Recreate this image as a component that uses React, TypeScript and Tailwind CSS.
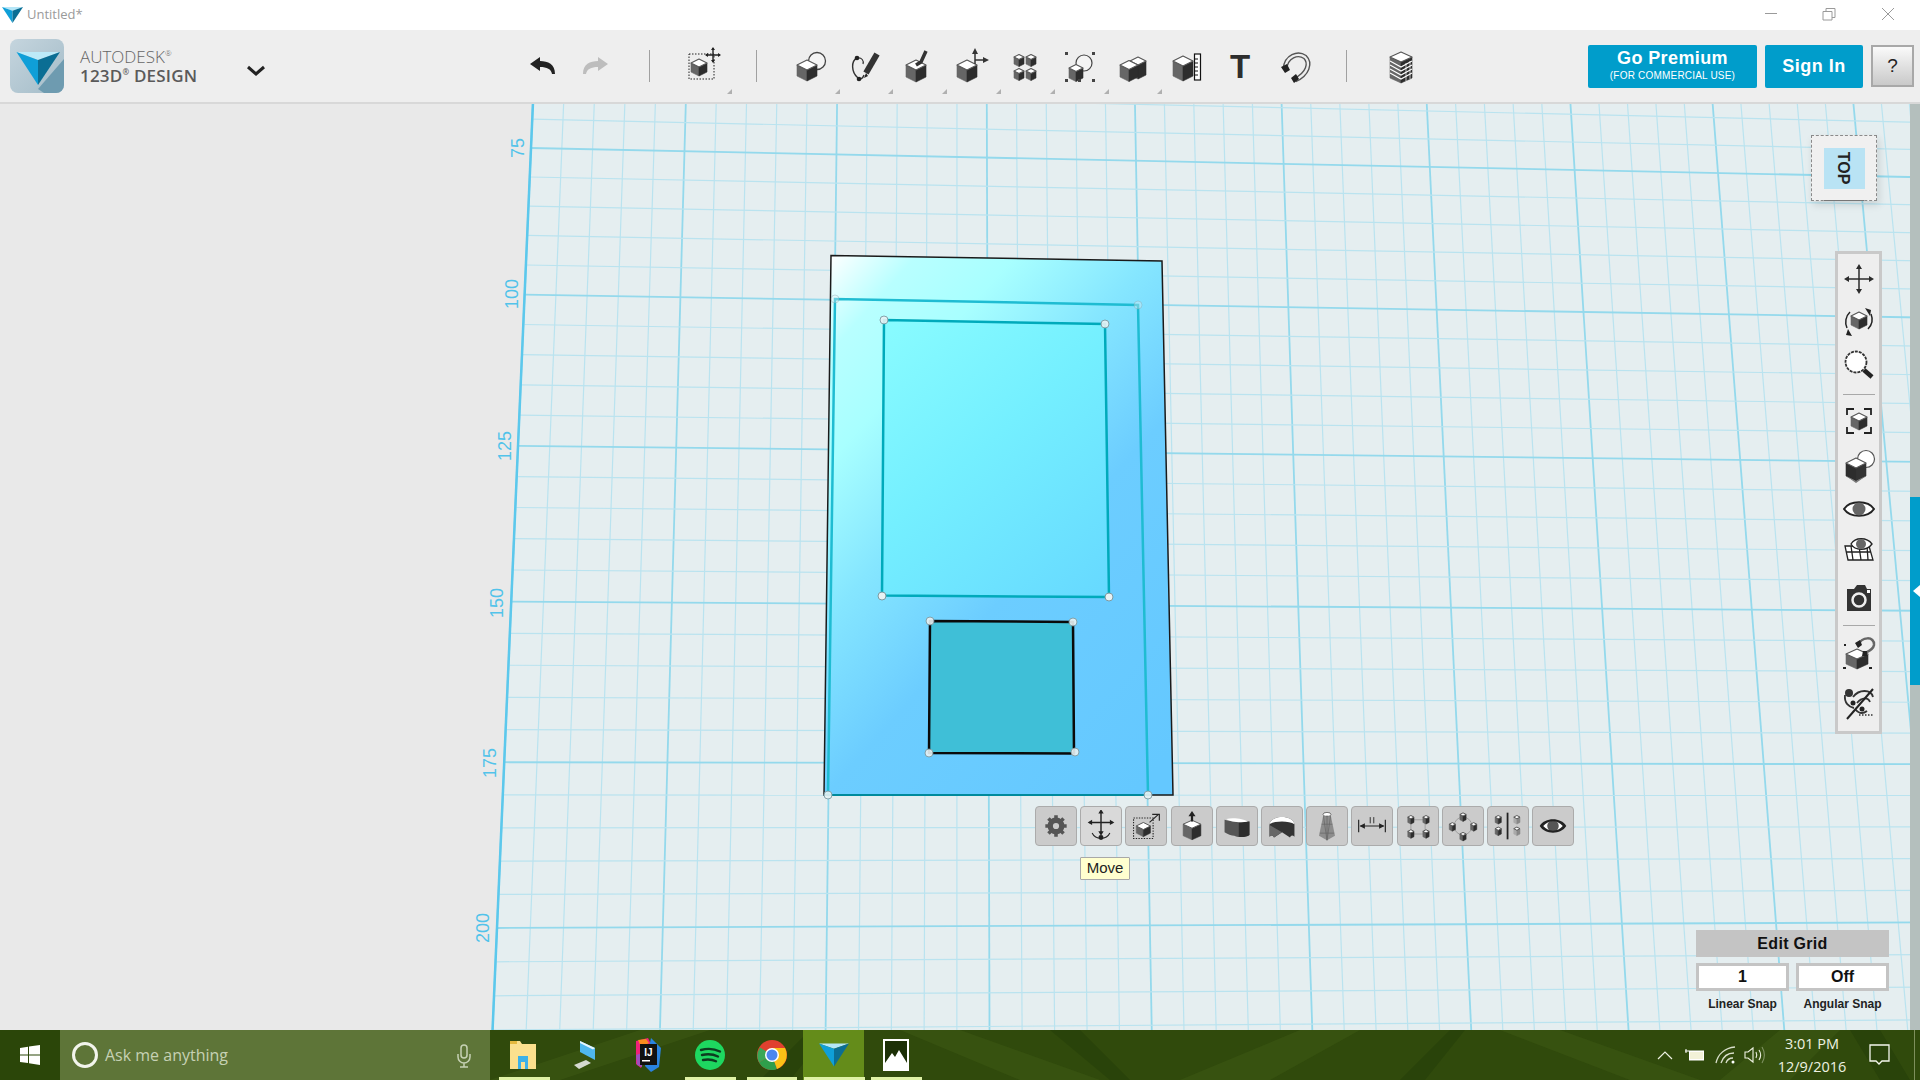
import React from "react";

type CP = { x: number; y: number; a?: number; b?: number; c?: number; l?: string; r?: string; t?: string };
const Cube = ({ x, y, a = 10, b = 5, c = 12, l = "#666", r = "#2d2d2d", t = "#fff" }: CP) => (
  <g>
    <polygon points={`${x - a},${y} ${x},${y + b} ${x},${y + b + c} ${x - a},${y + c}`} fill={l} stroke={l} strokeWidth=".6" />
    <polygon points={`${x + a},${y} ${x},${y + b} ${x},${y + b + c} ${x + a},${y + c}`} fill={r} stroke={r} strokeWidth=".6" />
    <polygon points={`${x},${y - b} ${x + a},${y} ${x},${y + b} ${x - a},${y}`} fill={t} stroke="#555" strokeWidth="1.1" strokeLinejoin="round" />
  </g>
);
const Ic = ({ children, s = 36, v = 36 }: { children: React.ReactNode; s?: number; v?: number }) => (
  <svg width={s} height={s} viewBox={`0 0 ${v} ${v}`} className="block shrink-0">{children}</svg>
);
const Logo = ({ w, h }: { w: number; h: number }) => (
  <svg width={w} height={h} viewBox="0 0 44 34" className="block">
    <polygon points="0,0 44,0 22,8" fill="#b5e6f7" />
    <polygon points="0,0 22,8 22,34" fill="#0f9fd8" />
    <polygon points="44,0 22,8 22,34" fill="#0b6e94" />
  </svg>
);

const tbIcons: React.ReactNode[] = [
  <Ic key="a"><rect x="4" y="7" width="25" height="25" fill="none" stroke="#222" strokeWidth="1" strokeDasharray="1.5 1.5" /><Cube x={14} y={16} a={8} b={4} c={9} /><path d="M28 1v14M21 8h14" stroke="#222" strokeWidth="1.4" /><path d="M28 0l-2 3h4zM28 16l-2-3h4zM20 8l3-2v4zM36 8l-3-2v4z" fill="#222" /></Ic>,
  <Ic key="b"><circle cx="25" cy="13" r="8.5" fill="#f4f4f4" stroke="#444" strokeWidth="1.3" /><Cube x={15} y={17} a={10} b={5} c={11} /></Ic>,
  <Ic key="c"><path d="M10 10C4 13 4 24 11 30c3 2 5 0 6-3" fill="none" stroke="#333" strokeWidth="1.4" /><path d="M10 10c5-1 7 3 6 6" fill="none" stroke="#333" strokeWidth="1.2" /><path d="M30 6l-11 19" stroke="#333" strokeWidth="6" /><path d="M19 25l-2 5 4-2z" fill="#222" /><circle cx="10" cy="10" r="2.3" fill="#222" /><circle cx="12" cy="31" r="2.3" fill="#222" /></Ic>,
  <Ic key="d"><Cube x={16} y={17} a={10} b={5} c={12} /><path d="M16 17l5-3 5-11" stroke="#333" strokeWidth="3.5" fill="none" /></Ic>,
  <Ic key="e"><Cube x={14} y={17} a={10} b={5} c={12} /><path d="M22 16V4M22 12h10" stroke="#333" strokeWidth="1.5" /><path d="M22 0l-3 6h6zM36 12l-6-3v6z" fill="#333" /></Ic>,
  <Ic key="f"><Cube x={12} y={9} a={5} b={2.5} c={7} /><Cube x={24} y={9} a={5} b={2.5} c={7} /><Cube x={12} y={23} a={5} b={2.5} c={7} /><Cube x={24} y={23} a={5} b={2.5} c={7} /></Ic>,
  <Ic key="g"><circle cx="22" cy="15" r="8" fill="#f4f4f4" stroke="#444" strokeWidth="1.2" /><Cube x={14} y={20} a={7} b={3.5} c={10} /><path d="M3 4h3v3H3zM30 4h3v3h-3zM3 31h3v3H3zM30 31h3v3h-3zM16 31h3v3h-3z" fill="#444" /></Ic>,
  <Ic key="h"><Cube x={23} y={13} a={8} b={4} c={14} /><Cube x={14} y={17} a={9} b={4.5} c={12} /></Ic>,
  <Ic key="i"><Cube x={14} y={13} a={10} b={5} c={15} /><rect x="25.5" y="6" width="6" height="26" fill="#fff" stroke="#111" strokeWidth="1.2" /><path d="M26 11h3M26 15h3M26 19h3M26 23h3M26 27h3" stroke="#111" /></Ic>,
  <Ic key="j"><text x="18" y="30" textAnchor="middle" fontFamily="Liberation Sans" fontWeight="700" fontSize="33" fill="#2d2d2d">T</text></Ic>,
  <Ic key="k"><path d="M8 21C9 8 21 4 28 9c6 6 3 17-10 23" fill="none" stroke="#555" strokeWidth="5" /><path d="M8 21C9 8 21 4 28 9c6 6 3 17-10 23" fill="none" stroke="#eee" strokeWidth="2.2" /><path d="M4 19l6-3 3 6-5 3zM14 30l5-4 3 5-5 4z" fill="#222" /></Ic>,
  <Ic key="l"><Cube x={18} y={9} a={11} b={5} c={21} /><path d="M7 13l11 6 11-6M7 17l11 6 11-6M7 21l11 6 11-6M7 25l11 6 11-6" stroke="#fff" strokeWidth="1.1" fill="none" /><path d="M23 15v18M27 13v18" stroke="#fff" strokeWidth=".7" /></Ic>,
];

const Arrows = ({ c = "#2c2c2c", s = 1.5 }: { c?: string; s?: number }) => (
  <g>
    <path d="M18 5v26M5 18h26" stroke={c} strokeWidth={s} />
    <path d="M18 3l-3 5h6zM18 33l-3-5h6zM3 18l5-3v6zM33 18l-5-3v6z" fill={c} />
  </g>
);
const Eye = ({ d = "#666", lw = 2 }: { d?: string; lw?: number }) => (
  <g>
    <path d="M3 18C9 9 27 9 33 18 27 27 9 27 3 18z" fill="#fff" stroke="#222" strokeWidth={lw} />
    <circle cx="18" cy="18" r="6.5" fill={d} />
  </g>
);

const Gear = () => (
  <g>
    <circle cx="18" cy="18" r="6.5" fill="none" stroke="#555" strokeWidth="6" />
    <path d="M18 6v24M6 18h24M9.5 9.5l17 17M26.5 9.5l-17 17" stroke="#555" strokeWidth="4" strokeDasharray="4 16" strokeDashoffset="0" />
  </g>
);

const ctxIcons: React.ReactNode[] = [
  <Gear key="a" />,
  <g key="b"><g transform="translate(0,-4)"><Arrows c="#222" s={1.6} /></g><path d="M8 26c4 8 16 8 20 0" fill="none" stroke="#222" strokeWidth="1.2" /><circle cx="18" cy="31" r="2.8" fill="#222" /></g>,
  <g key="c"><rect x="4" y="9" width="22" height="23" fill="none" stroke="#222" strokeWidth="1.2" strokeDasharray="1.5 1.5" /><Cube x={15} y={18} a={8} b={4} c={8} /><path d="M22 14l10-9M25 5h8v7" fill="none" stroke="#222" strokeWidth="1.3" /></g>,
  <g key="d"><Cube x={18} y={16} a={10} b={4.5} c={13} /><path d="M18 13V5" stroke="#222" strokeWidth="2.5" /><path d="M18 1l-4 6h8z" fill="#222" /></g>,
  <g key="e"><path d="M4 11c8 2 20 3 28 2v15c-4 3-14 3-17 1-3 0-8-2-11-4z" fill="#555" /><path d="M20 14l12-1v15c-3 2-8 3-12 2z" fill="#2d2d2d" /><path d="M6 10c8-2 20 0 24 3-8 2-20 0-24-3z" fill="#fff" /></g>,
  <g key="f"><path d="M4 16c2-11 26-11 28 0v14c-2-2-4-2-5 1l-9-6-9 6c-1-3-3-3-5-1z" fill="#333" /><path d="M4 16c2-11 26-11 28 0-6-4-22-4-28 0z" fill="#fff" /><path d="M4 17l14 8-9 6c-1-3-3-3-5-1z" fill="#666" /></g>,
  <g key="g"><path d="M14 5h8l5 24-9 5-9-5z" fill="#8d8d8d" /><ellipse cx="18" cy="5" rx="4.5" ry="2.3" fill="#fff" stroke="#666" /><path d="M18 6v28M12 16h12M10 26h16M14 7l4 27M22 7l-4 27" stroke="#666" strokeWidth=".8" /></g>,
  <g key="h"><path d="M3 11v14M33 11v14M5 18h26" stroke="#222" strokeWidth="1.3" /><path d="M4 18l6-3v6zM32 18l-6-3v6z" fill="#222" /><path d="M16 8v7M20 8v7" stroke="#222" strokeWidth="1" /></g>,
  <g key="i"><path d="M10 11h16v16H10z" fill="none" stroke="#999" strokeWidth="1" /><Cube x={10} y={8} a={3.5} b={1.8} c={6} /><Cube x={27} y={8} a={3.5} b={1.8} c={6} /><Cube x={10} y={24} a={3.5} b={1.8} c={6} /><Cube x={27} y={24} a={3.5} b={1.8} c={6} /></g>,
  <g key="j"><circle cx="18" cy="18" r="10" fill="none" stroke="#999" /><Cube x={18} y={5} a={3.5} b={1.8} c={6} /><Cube x={6} y={16} a={3.5} b={1.8} c={6} /><Cube x={30} y={16} a={3.5} b={1.8} c={6} /><Cube x={18} y={27} a={3.5} b={1.8} c={6} /></g>,
  <g key="k"><Cube x={7} y={8} a={3.5} b={1.8} c={6} /><Cube x={7} y={21} a={3.5} b={1.8} c={6} /><rect x="16.5" y="3" width="2" height="30" fill="#222" /><Cube x={28} y={8} a={3.5} b={1.8} c={6} l="#aaa" r="#888" /><Cube x={28} y={21} a={3.5} b={1.8} c={6} l="#aaa" r="#888" /></g>,
  <g key="l"><Eye d="#555" lw={0} /><path d="M3 18C9 8 27 8 33 18 27 28 9 28 3 18zM7 18c6 7 16 7 22 0-6-7-16-7-22 0z" fill="#222" fillRule="evenodd" /></g>,
];

type HP = { s: number; t: number };
function makeH() {
  const [x0, y0] = [531, 148], [x1, y1] = [1718, 173], [x2, y2] = [1776, 923], [x3, y3] = [497, 928];
  const dx1 = x1 - x2, dx2 = x3 - x2, sx = x0 - x1 + x2 - x3;
  const dy1 = y1 - y2, dy2 = y3 - y2, sy = y0 - y1 + y2 - y3;
  const det = dx1 * dy2 - dx2 * dy1;
  const g = (sx * dy2 - dx2 * sy) / det, h = (dx1 * sy - sx * dy1) / det;
  const a = x1 - x0 + g * x1, b = x3 - x0 + h * x3, d = y1 - y0 + g * y1, e = y3 - y0 + h * y3;
  return ({ s, t }: HP) => {
    const w = g * s + h * t + 1;
    return [(a * s + b * t + x0) / w, (d * s + e * t + y0) / w];
  };
}
const H = makeH();
const pt = (u: number, v: number) => H({ s: u / 40, t: v / 25 });

function Viewport() {
  const lines: React.ReactNode[] = [];
  for (let i = 0; i <= 55; i++) {
    const [a, b] = pt(i, -10), [c, d] = pt(i, 40);
    const major = i % 5 === 0;
    lines.push(<line key={`u${i}`} x1={a} y1={b} x2={c} y2={d} stroke={major ? "#94d9ec" : "#bae3ef"} strokeWidth={major ? 1.8 : 1.2} />);
  }
  for (let j = -10; j <= 40; j++) {
    const [a, b] = pt(0, j), [c, d] = pt(55, j);
    const major = j % 5 === 0;
    lines.push(<line key={`v${j}`} x1={a} y1={b} x2={c} y2={d} stroke={major ? "#94d9ec" : "#bae3ef"} strokeWidth={major ? 1.8 : 1.2} />);
  }
  const [ea, eb] = pt(0, -10), [ec, ed] = pt(0, 40);
  const labels: [string, number, number][] = [["75", 518, 148], ["100", 512, 294], ["125", 505, 446], ["150", 497, 603], ["175", 490, 763], ["200", 483, 928]];
  return (
    <svg className="absolute inset-0 block" width="1920" height="926" viewBox="0 104 1920 926">
      <defs>
        <linearGradient id="pg" gradientUnits="userSpaceOnUse" x1="831" y1="255" x2="1266" y2="647">
          <stop offset="0" stopColor="#ffffff" />
          <stop offset="0.11" stopColor="#b8ffff" />
          <stop offset="0.235" stopColor="#a8ffff" />
          <stop offset="0.41" stopColor="#85e6ff" />
          <stop offset="0.61" stopColor="#6ccdff" />
          <stop offset="1" stopColor="#64c8ff" />
        </linearGradient>
        <linearGradient id="wg" gradientUnits="userSpaceOnUse" x1="850" y1="300" x2="1110" y2="600">
          <stop offset="0" stopColor="#8effff" />
          <stop offset="0.5" stopColor="#74efff" />
          <stop offset="1" stopColor="#66d8ff" />
        </linearGradient>
      </defs>
      <polygon points={`${ea},${eb} 2400,${eb} 2400,${ed} ${ec},${ed}`} fill="#e5eef0" />
      {lines}
      <line x1={ea} y1={eb} x2={ec} y2={ed} stroke="#5cc8ec" strokeWidth="2.5" />
      {labels.map(([t, x, y]) => (
        <text key={t} x={x} y={y} transform={`rotate(-90 ${x} ${y})`} textAnchor="middle" dominantBaseline="central" fontFamily="Liberation Sans" fontSize="18" fill="#52c3ea">{t}</text>
      ))}
      <polygon points="831,255.5 1162,261 1173,795 824,795" fill="url(#pg)" stroke="#1a1a1a" strokeWidth="1.5" />
      <polygon points="884,320 1105,324 1109,597 882,595.5" fill="url(#wg)" stroke="#00aabb" strokeWidth="2.5" />
      <polyline points="828,795 835,299 1138,305 1148,795" fill="none" stroke="#1fbcd2" strokeWidth="2.5" />
      <line x1="824" y1="795" x2="1150" y2="795" stroke="#008a9c" strokeWidth="2" />
      <polygon points="930,621 1073,622 1074,753.5 929,753" fill="#3fbfd7" stroke="#0a0a0a" strokeWidth="2.5" strokeLinejoin="round" />
      {[[835, 299, .35], [1138, 305, .35], [828, 795, .9], [1148, 795, .9], [884, 320, .9], [1105, 324, .9], [882, 596, 1], [1109, 597, 1], [930, 621, .9], [1073, 622, .9], [929, 753, .9], [1075, 752, .9]].map(([x, y, o], i) => (
        <circle key={i} cx={x} cy={y} r="4" fill="#e8f2f4" fillOpacity={o} stroke="#7d9aa2" strokeOpacity={o} strokeWidth="1" />
      ))}
    </svg>
  );
}

function Palette() {
  return (
    <div className="absolute left-[1835px] top-[147px] flex h-[483px] w-[47px] flex-col items-center border-[3px] border-[#c9c9c9] bg-[#eeeeee] pt-[7px]">
      <Ic><Arrows /></Ic>
      <div className="mt-[6px]"><Ic><Cube x={18} y={13} a={8} b={4} c={9} /><path d="M30 11a14 14 0 0 1-3 15M6 25A14 14 0 0 1 9 9" fill="none" stroke="#222" strokeWidth="1.5" /><path d="M24 5l6 2-1 6zM11 33l-6-1 2-6z" fill="#222" /></Ic></div>
      <div className="mt-[8px]"><Ic><circle cx="15" cy="15" r="10.5" fill="#fff" stroke="#333" strokeWidth="1.8" strokeDasharray="3 1" /><path d="M23 23l8 7" stroke="#222" strokeWidth="4.5" /></Ic></div>
      <div className="mt-[11px] h-px w-[32px] shrink-0 bg-[#a8a8a8]" />
      <div className="mt-[8px]"><Ic><path d="M6 12V6h7M23 6h7v6M6 24v6h7M30 24v6h-7" fill="none" stroke="#222" strokeWidth="1.8" /><Cube x={18} y={14} a={8} b={4} c={9} /></Ic></div>
      <div className="mt-[9px]"><Ic><circle cx="25" cy="11" r="8.5" fill="#fff" stroke="#555" strokeWidth="1.2" /><Cube x={15} y={15} a={10} b={5} c={13} l="#2d2d2d" r="#333" /><path d="M5 28l10 5 10-5-10 7z" fill="#777" /></Ic></div>
      <div className="mt-[7px]"><Ic><Eye /></Ic></div>
      <div className="mt-[5px]"><Ic><path d="M4 14h24l4 14H7zM10 14l2 14M18 14l2 14M26 14l1 14M5 20h25" fill="#fff" stroke="#222" strokeWidth="1.3" /><path d="M10 12C14 5 26 5 31 12 26 19 14 19 10 12z" fill="#fff" stroke="#222" strokeWidth="1.3" /><circle cx="20" cy="12" r="5" fill="#666" /></Ic></div>
      <div className="mt-[12px]"><Ic><path d="M6 9h7l3-4h8l2 4h4v22H6z" fill="#333" /><circle cx="18" cy="20" r="6.5" fill="none" stroke="#eee" strokeWidth="2.5" /><rect x="26" y="10" width="3" height="3" fill="#fff" /></Ic></div>
      <div className="mt-[9px] h-px w-[32px] shrink-0 bg-[#a8a8a8]" />
      <div className="mt-[9px]"><Ic><Cube x={16} y={19} a={11} b={5} c={10} /><path d="M3 9h2v2H3zM2 32h3v2H2zM28 32h3v2h-3z" fill="#222" /><path d="M17 11C20 1 34 1 33 10c-1 5-5 6-9 8" fill="none" stroke="#666" strokeWidth="2.5" /><path d="M14 8l5-3 2 5-4 3zM22 16l4 0 0 5-5 0z" fill="#222" /></Ic></div>
      <div className="mt-[14px]"><Ic><circle cx="8" cy="8" r="4" fill="#333" /><path d="M4 10c-1 8 4 12 9 13M14 24c4 5 8 5 12 2M12 12c6-8 18-8 20 0M16 18c5-6 11-6 13-1" fill="none" stroke="#333" strokeWidth="1.8" /><path d="M32 4L6 34" stroke="#222" strokeWidth="2" /><path d="M18 30h14" stroke="#333" strokeWidth="1.5" strokeDasharray="1.5 1.5" /><circle cx="12" cy="18" r="2.5" fill="#222" /><circle cx="21" cy="24" r="2.5" fill="#222" /></Ic></div>
    </div>
  );
}

function Taskbar() {
  return (
    <div className="relative flex h-[50px] shrink-0 overflow-hidden bg-[#304a0c]">
      <svg className="absolute inset-0 block" width="1920" height="50" viewBox="0 0 1920 50">
        <path d="M490 50L640 0h70L560 50zM900 0l120 50h80L960 0zM1180 50l120-50h60l-90 50zM1500 0l130 50h70L1560 0zM1720 50l60-50h60l-50 50z" fill="#3a5612" fillOpacity=".7" />
        <path d="M760 50l50-50h20l-40 50zM1050 0l60 50h20l-50-50zM1400 50l50-50h15l-40 50zM1850 0l30 50h30l-30-50z" fill="#26400a" fillOpacity=".7" />
      </svg>
      <div className="relative flex w-[60px] items-center justify-center bg-[#2b4609]">
        <svg width="20" height="20" viewBox="0 0 20 20"><path d="M0 3l8-1.200V9.500H0zM9 1.600L20 0v9.500H9zM0 10.500h8V18L0 17zM9 10.500h11V20L9 18.300z" fill="#fff" /></svg>
      </div>
      <div className="relative flex w-[430px] items-center bg-[#5e7538]">
        <div className="ml-[12px] h-[26px] w-[26px] rounded-full border-[3px] border-[#f2f4ec]" />
        <span className="ml-[7px] font-['Open_Sans'] text-[16px] text-[#c6d1b4]">Ask me anything</span>
        <svg className="absolute left-[396px] top-[14px]" width="16" height="24" viewBox="0 0 16 24" fill="none" stroke="#c6d1b4" strokeWidth="1.5"><rect x="5" y="1" width="6" height="13" rx="3" /><path d="M2 10v3a6 6 0 0 0 12 0v-3M8 19v4M4 23h8" /></svg>
      </div>
      <div className="relative flex">
        <div className="flex w-[64px] items-center justify-center pl-[2px]">
          <svg width="28" height="30" viewBox="0 0 28 30"><path d="M1 1h10l2 3h14v25H1z" fill="#fbe08e" /><path d="M1 1h7v3H1z" fill="#e5b93e" /><path d="M9 29V16h10v13h-3v-7h-4v7z" fill="#3cb1e8" /></svg>
        </div>
        <div className="flex w-[63px] items-center justify-center">
          <svg width="30" height="34" viewBox="0 0 30 34"><path d="M9 3l15 7v12L9 14z" fill="#4fb7ee" /><path d="M9 3l15 7-2 1.500L9 5z" fill="#e8f6fd" /><path d="M3 27l12-5 5 3-12 6z" fill="#d5d9d0" /></svg>
        </div>
        <div className="flex w-[61px] items-center justify-center">
          <svg width="30" height="36" viewBox="0 0 30 36"><path d="M3 4l12-3 3 6-10 24-5-4z" fill="#f0217a" /><path d="M18 1l10 10-2 19-8 5-6-6z" fill="#2a83e0" /><path d="M3 18l6-2v14l-5-2z" fill="#9c4fc0" /><path d="M5 3l8-1 3 4-8 4z" fill="#fb8c1e" /><rect x="7" y="7" width="17" height="21" fill="#111" /><text x="15.500" y="19" textAnchor="middle" fontFamily="Liberation Sans" fontWeight="700" fontSize="10" fill="#fff">IJ</text><rect x="9" y="23" width="8" height="1.500" fill="#fff" /></svg>
        </div>
        <div className="flex w-[63px] items-center justify-center">
          <svg width="30" height="30" viewBox="0 0 30 30"><circle cx="15" cy="15" r="15" fill="#1ed760" /><path d="M6 10c7-2 13-1.500 19 1.500M7 15c6-1.500 11-1 16 1.500M8 20c5-1 9-.7 13 1.300" fill="none" stroke="#0d3c20" strokeWidth="2.400" strokeLinecap="round" /></svg>
        </div>
        <div className="flex w-[62px] items-center justify-center">
          <svg width="30" height="30" viewBox="0 0 30 30"><circle cx="15" cy="15" r="15" fill="#e0402f" /><path d="M15 15L2 22.500a15 15 0 0 1 1-15z" fill="#3aa757" /><path d="M15 15L2 22.500A15 15 0 0 0 15 30c2 0 4-.5 5-1z" fill="#2f9e4b" /><path d="M15 8h13a15 15 0 0 1-8 21l-5-14z" fill="#fbc116" /><circle cx="15" cy="15" r="7" fill="#fff" /><circle cx="15" cy="15" r="5.500" fill="#4c86ee" /></svg>
        </div>
        <div className="flex w-[61px] items-center justify-center bg-[#648c1a]"><Logo w={30} h={32} /></div>
        <div className="ml-[6px] flex w-[51px] items-center justify-center">
          <svg width="26" height="32" viewBox="0 0 26 32"><rect width="26" height="32" fill="#fff" /><rect x="2" y="2" width="22" height="22" fill="#1c3006" /><path d="M2 24l7-10 3 4 4-7 8 13v8H2z" fill="#fff" /></svg>
        </div>
      </div>
      <div className="absolute bottom-0 left-[499px] h-[3px] w-[51px] bg-[#dff2a6]" />
      <div className="absolute bottom-0 left-[685px] h-[3px] w-[51px] bg-[#dff2a6]" />
      <div className="absolute bottom-0 left-[747px] h-[3px] w-[50px] bg-[#dff2a6]" />
      <div className="absolute bottom-0 left-[804px] h-[3px] w-[61px] bg-[#dff2a6]" />
      <div className="absolute bottom-0 left-[871px] h-[3px] w-[51px] bg-[#dff2a6]" />
      <div className="relative ml-auto flex items-center text-[#eef2e2]">
        <svg className="mr-[12px]" width="16" height="10" viewBox="0 0 16 10" fill="none" stroke="#eef2e2" strokeWidth="1.200"><path d="M1 9l7-7 7 7" /></svg>
        <svg className="mr-[10px]" width="20" height="13" viewBox="0 0 20 13"><rect x="4" y="1.500" width="15" height="10" fill="#fff" /><rect x="5" y="3" width="13" height="7" fill="#f2f2d8" /><path d="M0 2h4M1 0v4" stroke="#fff" /></svg>
        <svg className="mr-[7px]" width="22" height="18" viewBox="0 0 22 18" fill="none" stroke="#d9dfcb" strokeWidth="1.300"><path d="M1 17C3 8 10 2 20 1M6 17c2-6 6-10 13-10M11 17c1-3 3-5 7-5" /><circle cx="18" cy="16" r="1.500" fill="#fff" stroke="none" /></svg>
        <svg className="mr-[7px]" width="22" height="18" viewBox="0 0 22 18" fill="none" stroke="#eef2e2" strokeWidth="1.100"><path d="M1 6h3l5-4v14l-5-4H1zM12 6c1 2 1 4 0 6M15 4c2 3 2 7 0 10" /><path d="M18 1c3 5 3 11 0 16" strokeOpacity=".4" /></svg>
        <div className="flex w-[78px] flex-col items-center font-['Open_Sans'] text-[14.500px] leading-[23px]">
          <span>3:01 PM</span>
          <span>12/9/2016</span>
        </div>
        <svg className="ml-[18px] mr-[29px]" width="22" height="22" viewBox="0 0 22 22" fill="none" stroke="#f5f7ee" strokeWidth="1.300"><path d="M1 1h19v16h-7l-3 3-3-3H1z" /></svg>
        <div className="absolute right-[5px] top-0 h-full w-px bg-[#7d8f5c]" />
      </div>
    </div>
  );
}

export default function App() {
  const sans = "font-['Liberation_Sans','Arial',sans-serif]";
  const corners = [727, 835, 888, 942, 996, 1050, 1104, 1157];
  return (
    <div className={`flex h-[1080px] w-[1920px] flex-col overflow-hidden bg-white ${sans}`}>
      <div className="relative flex h-[30px] shrink-0 items-center bg-white pl-[2px]">
        <Logo w={21} h={18} />
        <span className="ml-[4px] font-['Open_Sans'] text-[13px] text-[#9a9a9a]">Untitled*</span>
        <svg className="absolute left-[1760px] top-0" width="140" height="30" viewBox="0 0 140 30" fill="none" stroke="#9a9a9a" strokeWidth="1">
          <path d="M5 13.500h12M63 11.500h9v8.500h-9zM66 11V8.500h9v9h-3M122 8l12 12M134 8l-12 12" />
        </svg>
      </div>

      <div className="relative flex h-[74px] shrink-0 items-center border-b-2 border-[#d8d8d8] bg-[#eeeeee]">
        <div className="ml-[10px] h-[54px] w-[54px] shrink-0 overflow-hidden rounded-[8px] bg-gradient-to-br from-[#c5d5de] to-[#a4bcc8]">
          <svg width="54" height="54" viewBox="0 0 54 54" className="block">
            <path d="M54 20L28 50l6 4h20z" fill="#6e9bb0" />
            <polygon points="6.500,13 50,13 28,21" fill="#bdeaf8" />
            <polygon points="6.500,13 28,21 28,46" fill="#0f9fd8" />
            <polygon points="50,13 28,21 28,46" fill="#0b6e94" />
          </svg>
        </div>
        <div className="ml-[16px] flex w-[126px] shrink-0 flex-col gap-[3px] font-['Open_Sans']">
          <span className="block h-[16px] text-[17px] font-light leading-[16px] text-[#666]">AUTODESK<span className="align-top text-[8px] leading-[8px]">®</span></span>
          <span className="block h-[16px] text-[17px] font-semibold leading-[16px] tracking-[0.2px] text-[#5a5a5a]">123D<span className="align-top text-[8px] leading-[8px]">®</span> DESIGN</span>
        </div>
        <svg className="ml-[40px] mt-[10px] shrink-0" width="20" height="12" viewBox="0 0 20 12" fill="none" stroke="#222" strokeWidth="3"><path d="M2 2l8 7 8-7" /></svg>
        <svg className="ml-[264px] shrink-0" width="26" height="20" viewBox="0 0 26 20"><path d="M0 8l10-7v4c8 0 15 3 15 13h-3c-1-5-5-7-12-7v4z" fill="#222" /></svg>
        <svg className="ml-[26px] shrink-0" width="26" height="20" viewBox="0 0 26 20"><path d="M26 8L16 1v4C8 5 1 8 1 18h3c1-5 5-7 12-7v4z" fill="#bdbdbd" /></svg>
        <div className="ml-[41px] h-[32px] w-px shrink-0 bg-[#a0a0a0]" />
        <div className="ml-[36px] -mt-[2px] flex w-[34px] shrink-0 justify-center">{tbIcons[0]}</div>
        <div className="ml-[36px] h-[32px] w-px shrink-0 bg-[#a0a0a0]" />
        <div className="ml-[35px] flex w-[36px] shrink-0 justify-center">{tbIcons[1]}</div>
        <div className="ml-[19px] flex w-[36px] shrink-0 justify-center">{tbIcons[2]}</div>
        <div className="ml-[17px] flex w-[36px] shrink-0 justify-center">{tbIcons[3]}</div>
        <div className="ml-[17px] flex w-[36px] shrink-0 justify-center">{tbIcons[4]}</div>
        <div className="ml-[18px] flex w-[36px] shrink-0 justify-center">{tbIcons[5]}</div>
        <div className="ml-[19px] flex w-[36px] shrink-0 justify-center">{tbIcons[6]}</div>
        <div className="ml-[17px] flex w-[36px] shrink-0 justify-center">{tbIcons[7]}</div>
        <div className="ml-[18px] flex w-[36px] shrink-0 justify-center">{tbIcons[8]}</div>
        <div className="ml-[17px] flex w-[36px] shrink-0 justify-center">{tbIcons[9]}</div>
        <div className="ml-[19px] flex w-[36px] shrink-0 justify-center">{tbIcons[10]}</div>
        <div className="ml-[33px] h-[32px] w-px shrink-0 bg-[#a0a0a0]" />
        <div className="ml-[36px] flex w-[36px] shrink-0 justify-center">{tbIcons[11]}</div>
        <div className="ml-[169px] flex h-[43px] w-[169px] shrink-0 flex-col items-center rounded-[2px] bg-[#009dcb] text-white">
          <span className="mt-[1px] text-[18px] font-bold leading-[24px] tracking-[0.4px]">Go Premium</span>
          <span className="text-[10px] leading-[12px] tracking-[0.2px]">(FOR COMMERCIAL USE)</span>
        </div>
        <div className="ml-[8px] flex h-[43px] w-[98px] shrink-0 items-center justify-center rounded-[2px] bg-[#009dcb] text-[18px] font-bold tracking-[0.5px] text-white">Sign In</div>
        <div className="ml-[8px] flex h-[42px] w-[43px] shrink-0 items-center justify-center border-2 border-[#a8a8a8] bg-gradient-to-b from-[#fafafa] to-[#c9c9c9] text-[19px] text-[#222]">?</div>
        {corners.map((x) => (
          <svg key={x} className="absolute top-[59px]" style={{ left: x }} width="5" height="5" viewBox="0 0 5 5"><path d="M5 0v5H0z" fill="#b0b0b0" /></svg>
        ))}
      </div>

      <div className="relative flex-1 overflow-hidden bg-[#e9e9e9]">
        <Viewport />

        <div className="absolute left-[1811px] top-[31px] flex h-[66px] w-[66px] items-center justify-center border border-dashed border-[#8a8a8a] bg-[#f0f0f0] shadow-[2px_4px_8px_rgba(0,0,0,0.12)]">
          <div className="flex h-[41px] w-[41px] items-center justify-center bg-[#b9e3f4]">
            <span className="-ml-[2px] rotate-90 text-[16px] font-bold text-[#222]">TOP</span>
          </div>
          <div className="absolute bottom-[-1px] left-[12px] h-px w-[40px] bg-[#777]" />
        </div>

        <Palette />

        <div className="absolute right-0 top-0 h-full w-[10px] bg-[#b4bfbd]">
          <div className="absolute left-0 top-[393px] flex h-[188px] w-[10px] items-center justify-end bg-[#009dcb]">
            <div className="h-0 w-0 border-y-[6px] border-r-[7px] border-y-transparent border-r-white" />
          </div>
        </div>

        <div className="absolute left-[1035px] top-[702px] flex gap-[3.200px]">
          {ctxIcons.map((ic, i) => (
            <div key={i} className={`flex h-[40px] w-[42px] items-center justify-center rounded-[4px] border border-[#ababab] ${i === 1 ? "bg-[#d9d9d9]" : "bg-[#cbcbcb]"}`}>
              <Ic s={32}>{ic}</Ic>
            </div>
          ))}
        </div>
        <div className="absolute left-[1080px] top-[753px] flex h-[23px] w-[50px] items-center justify-center rounded-[1px] border border-[#a8a8a8] bg-[#ffffcf] text-[15px] text-[#222]">Move</div>

        <div className="absolute left-[1696px] top-[826px] flex w-[193px] flex-col">
          <div className="flex h-[27px] items-center justify-center bg-[#c4c4c4] text-[16px] font-bold tracking-[0.3px] text-[#111]">Edit Grid</div>
          <div className="mt-[6px] flex justify-between">
            <div className="flex h-[28px] w-[93px] items-center justify-center border-[3px] border-[#c4c4c4] bg-white text-[16px] font-bold text-[#111]">1</div>
            <div className="flex h-[28px] w-[93px] items-center justify-center border-[3px] border-[#c4c4c4] bg-white text-[16px] font-bold text-[#111]">Off</div>
          </div>
          <div className="mt-[4px] flex justify-between text-[12px] font-bold text-[#222]">
            <span className="w-[93px] text-center">Linear Snap</span>
            <span className="w-[93px] text-center">Angular Snap</span>
          </div>
        </div>
      </div>

      <Taskbar />
    </div>
  );
}
